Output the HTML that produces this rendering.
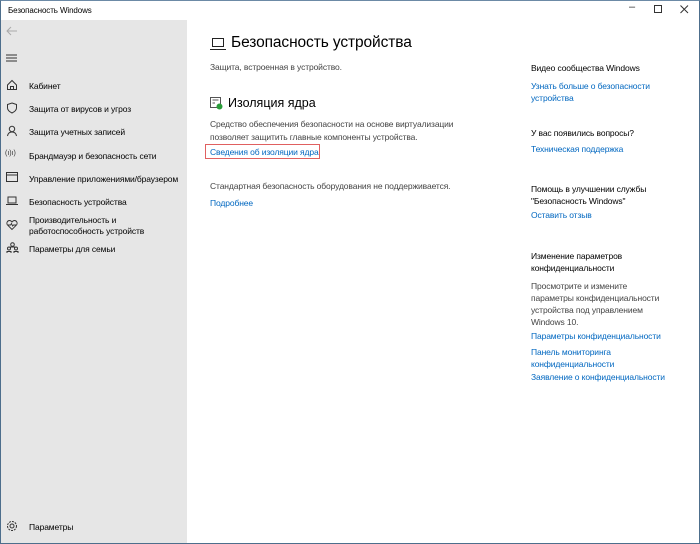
<!DOCTYPE html>
<html><head><meta charset="utf-8"><style>
*{margin:0;padding:0;box-sizing:border-box}
body{width:700px;height:544px;overflow:hidden;font-family:"Liberation Sans",sans-serif;background:#fff;position:relative;color:#000}
.frame{position:absolute;left:0;top:0;width:700px;height:544px;border:1px solid #4d6e8c;border-top:1px solid #6c8aa6}
.side{position:absolute;left:1px;top:20px;width:186px;height:523px;background:#e6e6e6}
.t{position:absolute;white-space:nowrap}
.s{font-size:8.5px;letter-spacing:-0.12px;color:#000}
.g{color:#444}
.l{color:#0067c0}
svg{position:absolute}
</style></head><body>
<div class="frame"></div>
<div class="side"></div>
<div class="t" style="left:8px;top:6px;font-size:8px;letter-spacing:-0.1px">Безопасность Windows</div>
<div class="t" style="left:629px;top:1px;font-size:11px;color:#333">–</div>
<svg style="left:654px;top:5px" width="9" height="9"><rect x="0.5" y="0.5" width="7" height="7" fill="none" stroke="#333"/></svg>
<svg style="left:680px;top:5px" width="9" height="9"><path d="M0.5 0.5L8 8M8 0.5L0.5 8" stroke="#333"/></svg>
<svg style="left:6px;top:26px" width="12" height="10"><path d="M1 5H11M5 1L1 5L5 9" stroke="#aaa" fill="none"/></svg>
<svg style="left:6px;top:54px" width="12" height="8"><path d="M0 1H11M0 4H11M0 7H11" stroke="#333"/></svg>

<svg style="left:6px;top:79px" width="12" height="12"><path d="M1.5 6L6 1.5L10.5 6V10.5H1.5Z M4.5 10.5V7.5H7.5V10.5" fill="none" stroke="#333"/></svg>
<div class="t s" style="left:29px;top:81px">Кабинет</div>
<svg style="left:6px;top:102px" width="12" height="12"><path d="M6 1L10.5 2.5V6C10.5 8.5 8 10 6 11C4 10 1.5 8.5 1.5 6V2.5Z" fill="none" stroke="#333"/></svg>
<div class="t s" style="left:29px;top:104px">Защита от вирусов и угроз</div>
<svg style="left:6px;top:125px" width="12" height="12"><circle cx="6" cy="4" r="2.7" fill="none" stroke="#333"/><path d="M1.5 11C2 8 4 7 6 7S10 8 10.5 11" fill="none" stroke="#333"/></svg>
<div class="t s" style="left:29px;top:127px">Защита учетных записей</div>
<div class="t" style="left:5px;top:150px;font-size:7px;color:#333">(ı)ı)</div>
<div class="t s" style="left:29px;top:151px">Брандмауэр и безопасность сети</div>
<svg style="left:6px;top:172px" width="13" height="11"><rect x="0.5" y="0.5" width="11" height="9" fill="none" stroke="#333"/><path d="M0.5 3H11.5" stroke="#333"/></svg>
<div class="t s" style="left:29px;top:174px">Управление приложениями/браузером</div>
<svg style="left:6px;top:196px" width="13" height="10"><rect x="2" y="1" width="8" height="6" fill="none" stroke="#333"/><path d="M0 8.5H12" stroke="#333"/></svg>
<div class="t s" style="left:29px;top:197px">Безопасность устройства</div>
<svg style="left:6px;top:219px" width="12" height="12"><path d="M6 10.5L1.5 6C0 4 1.5 1.5 3.5 1.5C4.7 1.5 5.5 2.3 6 3C6.5 2.3 7.3 1.5 8.5 1.5C10.5 1.5 12 4 10.5 6Z M2 6H4.5L5.5 4.5L6.5 7L7.5 6H10" fill="none" stroke="#333" stroke-width="0.9"/></svg>
<div class="t s" style="left:29px;top:215px;line-height:11px">Производительность и<br>работоспособность устройств</div>
<svg style="left:6px;top:242px" width="13" height="12"><circle cx="6.5" cy="2.5" r="1.8" fill="none" stroke="#333"/><circle cx="3" cy="6.5" r="1.5" fill="none" stroke="#333"/><circle cx="10" cy="6.5" r="1.5" fill="none" stroke="#333"/><path d="M1 11V9.5H5V11M8 11V9.5H12V11M4.5 6V5H8.5V6" fill="none" stroke="#333"/></svg>
<div class="t s" style="left:29px;top:244px">Параметры для семьи</div>
<svg style="left:6px;top:520px" width="12" height="12"><circle cx="6" cy="6" r="4.5" fill="none" stroke="#333" stroke-dasharray="2 1"/><circle cx="6" cy="6" r="2" fill="none" stroke="#333"/></svg>
<div class="t s" style="left:29px;top:522px">Параметры</div>

<svg style="left:210px;top:38px" width="16" height="13"><rect x="2.5" y="0.5" width="11" height="8" fill="none" stroke="#222"/><path d="M0 11.5H16" stroke="#222"/></svg>
<div class="t" style="left:231px;top:34px;font-size:15.5px;letter-spacing:-0.1px;color:#000">Безопасность устройства</div>
<div class="t s g" style="left:210px;top:62px">Защита, встроенная в устройство.</div>
<svg style="left:210px;top:97px" width="13" height="13"><rect x="0.5" y="0.5" width="10" height="10" fill="none" stroke="#555"/><path d="M2.5 3H8.5M2.5 6H5" stroke="#555"/><circle cx="9.5" cy="9.5" r="3" fill="#2a9d3a"/></svg>
<div class="t" style="left:228px;top:96px;font-size:12.5px">Изоляция ядра</div>
<div class="t s g" style="left:210px;top:118px;line-height:13px">Средство обеспечения безопасности на основе виртуализации<br>позволяет защитить главные компоненты устройства.</div>
<div style="position:absolute;left:205px;top:144px;width:115px;height:15px;border:1px solid #e06060"></div>
<div class="t s l" style="left:210px;top:147px">Сведения об изоляции ядра</div>
<div class="t s g" style="left:210px;top:181px">Стандартная безопасность оборудования не поддерживается.</div>
<div class="t s l" style="left:210px;top:198px">Подробнее</div>

<div class="t s" style="left:531px;top:63px">Видео сообщества Windows</div>
<div class="t s l" style="left:531px;top:80px;line-height:12px">Узнать больше о безопасности<br>устройства</div>
<div class="t s" style="left:531px;top:128px">У вас появились вопросы?</div>
<div class="t s l" style="left:531px;top:144px">Техническая поддержка</div>
<div class="t s" style="left:531px;top:183px;line-height:12px">Помощь в улучшении службы<br>"Безопасность Windows"</div>
<div class="t s l" style="left:531px;top:210px">Оставить отзыв</div>
<div class="t s" style="left:531px;top:250px;line-height:12px">Изменение параметров<br>конфиденциальности</div>
<div class="t s g" style="left:531px;top:280px;line-height:12px">Просмотрите и измените<br>параметры конфиденциальности<br>устройства под управлением<br>Windows 10.</div>
<div class="t s l" style="left:531px;top:331px">Параметры конфиденциальности</div>
<div class="t s l" style="left:531px;top:346px;line-height:12px">Панель мониторинга<br>конфиденциальности</div>
<div class="t s l" style="left:531px;top:372px">Заявление о конфиденциальности</div>
</body></html>
